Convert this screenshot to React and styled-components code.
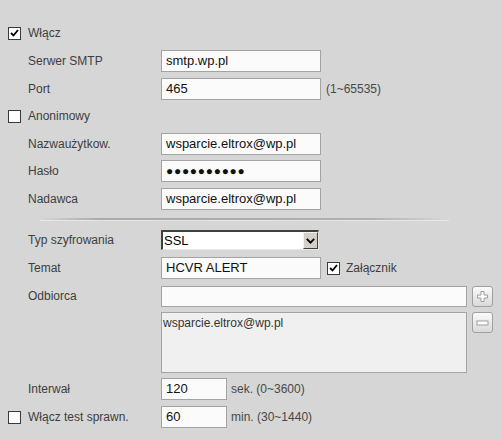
import React from "react";
import styled, { createGlobalStyle } from "styled-components";

const Global = createGlobalStyle`
  html, body { margin: 0; padding: 0; background: #d6d6d6; }
  body { font-family: "Liberation Sans", Arial, sans-serif; }
`;

const Page = styled.div`
  width: 501px;
  min-height: 440px;
  box-sizing: border-box;
  padding: 22px 0 0 8px;
  background: #d6d6d6;
  display: flex;
  flex-direction: column;
`;

const Row = styled.div`
  display: flex;
  align-items: ${(p) => (p.$top ? "flex-start" : "center")};
  height: ${(p) => p.$h || 22}px;
  margin-top: ${(p) => p.$mt || 0}px;
`;

const LabelCell = styled.div`
  width: 153px;
  flex: none;
  box-sizing: border-box;
  padding-left: ${(p) => (p.$check ? 0 : 20)}px;
  display: flex;
  align-items: center;
  font-size: 12px;
  color: #3e3e3e;
  white-space: nowrap;
`;

const BoxWrap = styled.span`
  width: 13px;
  height: 13px;
  box-sizing: border-box;
  border: 1px solid #3a3a3a;
  background: #fff;
  display: inline-flex;
  align-items: center;
  justify-content: center;
  flex: none;
  margin-right: ${(p) => p.$mr ?? 7}px;
`;

const CheckText = styled.span`
  font-size: 12px;
  color: #3e3e3e;
`;

const Field = styled.div`
  width: ${(p) => p.$w || 160}px;
  height: ${(p) => p.$h || 22}px;
  box-sizing: border-box;
  border: 1px solid #a3a3a3;
  background: #fbfbfb;
  padding: 0 4px;
  font-size: 13px;
  line-height: 20px;
  color: #111;
  white-space: nowrap;
  overflow: hidden;
  flex: none;
`;

const Dots = styled.span`
  font-size: 12px;
  letter-spacing: 0.7px;
`;

const Area = styled.div`
  width: 306px;
  height: 61px;
  box-sizing: border-box;
  border: 1px solid #a3a3a3;
  background: #f0f0f0;
  padding: 3px 0 0 1px;
  font-size: 12px;
  line-height: 14px;
  color: #333;
  flex: none;
`;

const Hint = styled.span`
  font-size: 12px;
  color: #484848;
  margin-left: ${(p) => p.$ml || 5}px;
  white-space: nowrap;
`;

const Select = styled.div`
  width: 158px;
  height: 20px;
  box-sizing: border-box;
  border-top: 2px solid #404040;
  border-left: 2px solid #404040;
  border-right: 1px solid #e8e8e8;
  border-bottom: 1px solid #e8e8e8;
  background: #fff;
  display: flex;
  align-items: center;
  justify-content: space-between;
  font-size: 13px;
  color: #000;
  padding-left: 1px;
`;

const Arrow = styled.span`
  width: 15px;
  height: 17px;
  box-sizing: border-box;
  background: #d4d0c8;
  border-left: 1px solid #f4f4f4;
  border-top: 1px solid #f4f4f4;
  border-right: 1px solid #404040;
  border-bottom: 1px solid #404040;
  display: flex;
  align-items: center;
  justify-content: center;
`;

const Separator = styled.div`
  height: 2px;
  margin: 8px 52px 0 32px;
  background: linear-gradient(
    to right,
    rgba(170, 170, 170, 0),
    #a9a9a9 15%,
    #b0b0b0 80%,
    rgba(170, 170, 170, 0)
  );
  border-bottom: 1px solid #e6e6e6;
`;

const IconButton = styled.div`
  width: 21px;
  height: 21px;
  box-sizing: border-box;
  margin-left: 5px;
  border: 1px solid #a0a0a0;
  border-radius: 3px;
  background: linear-gradient(#fbfbfb, #d9d9d9);
  display: flex;
  align-items: center;
  justify-content: center;
  flex: none;
`;

const Inline = styled.span`
  display: inline-flex;
  align-items: center;
  margin-left: 6px;
`;

function Check({ checked, mr }) {
  return (
    <BoxWrap $mr={mr}>
      {checked && (
        <svg width="9" height="8" viewBox="0 0 9 8">
          <path d="M1 4 L3.5 6.5 L8 1" fill="none" stroke="#000" strokeWidth="1.8" />
        </svg>
      )}
    </BoxWrap>
  );
}

function FieldRow({ label, children, mt }) {
  return (
    <Row $mt={mt}>
      <LabelCell>{label}</LabelCell>
      {children}
    </Row>
  );
}

export default function App() {
  return (
    <>
      <Global />
      <Page>
        <Row>
          <Check checked />
          <CheckText>Włącz</CheckText>
        </Row>
        <FieldRow label="Serwer SMTP" mt={6}>
          <Field>smtp.wp.pl</Field>
        </FieldRow>
        <FieldRow label="Port" mt={6}>
          <Field>465</Field>
          <Hint>(1~65535)</Hint>
        </FieldRow>
        <Row $mt={5}>
          <Check />
          <CheckText>Anonimowy</CheckText>
        </Row>
        <FieldRow label="Nazwaużytkow." mt={6}>
          <Field>wsparcie.eltrox@wp.pl</Field>
        </FieldRow>
        <FieldRow label="Hasło" mt={5}>
          <Field>
            <Dots>●●●●●●●●●●</Dots>
          </Field>
        </FieldRow>
        <FieldRow label="Nadawca" mt={6}>
          <Field>wsparcie.eltrox@wp.pl</Field>
        </FieldRow>

        <Separator />

        <FieldRow label="Typ szyfrowania" mt={8}>
          <Select>
            <span>SSL</span>
            <Arrow>
              <svg width="9" height="6" viewBox="0 0 9 6">
                <path d="M0.8 0.8 L4.5 4.6 L8.2 0.8" fill="none" stroke="#000" strokeWidth="1.8" />
              </svg>
            </Arrow>
          </Select>
        </FieldRow>
        <FieldRow label="Temat" mt={6}>
          <Field>HCVR ALERT</Field>
          <Inline>
            <Check checked mr={6} />
            <CheckText>Załącznik</CheckText>
          </Inline>
        </FieldRow>
        <FieldRow label="Odbiorca" mt={6}>
          <Field $w={306} $h={21} />
          <IconButton>
            <svg width="13" height="13" viewBox="0 0 13 13">
              <path
                d="M5 1.5 H8 V5 H11.5 V8 H8 V11.5 H5 V8 H1.5 V5 H5 Z"
                fill="#fff"
                stroke="#9c9c9c"
                strokeWidth="1"
              />
            </svg>
          </IconButton>
        </FieldRow>
        <Row $mt={5} $h={61} $top>
          <LabelCell />
          <Area>wsparcie.eltrox@wp.pl</Area>
          <IconButton>
            <svg width="13" height="6" viewBox="0 0 13 6">
              <rect x="1" y="1" width="11" height="4" fill="#fff" stroke="#9c9c9c" strokeWidth="1" />
            </svg>
          </IconButton>
        </Row>
        <FieldRow label="Interwał" mt={5}>
          <Field $w={66}>120</Field>
          <Hint $ml={4}>sek. (0~3600)</Hint>
        </FieldRow>
        <Row $mt={6}>
          <LabelCell $check>
            <Check />
            Włącz test sprawn.
          </LabelCell>
          <Field $w={66}>60</Field>
          <Hint $ml={4}>min. (30~1440)</Hint>
        </Row>
      </Page>
    </>
  );
}
